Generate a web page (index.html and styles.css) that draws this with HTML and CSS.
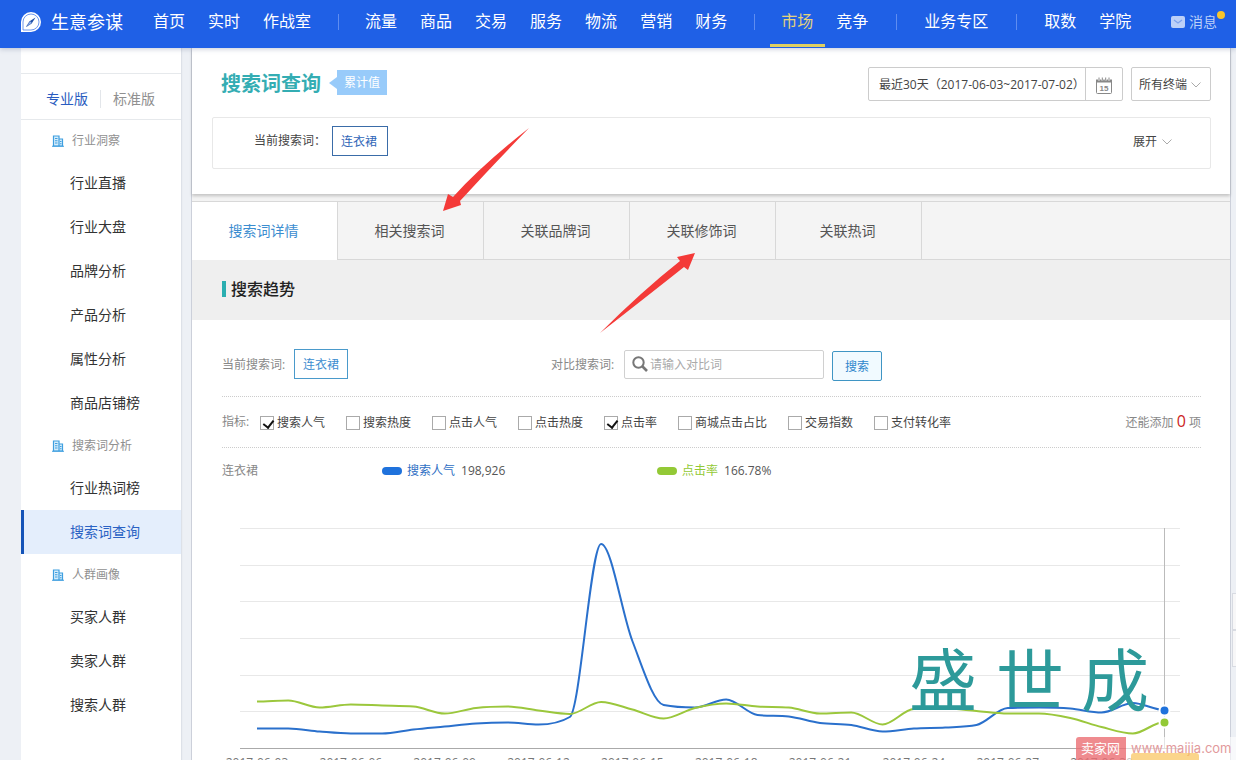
FILE: index.html
```html
<!DOCTYPE html>
<html lang="zh-CN">
<head>
<meta charset="utf-8">
<meta name="viewport" content="width=device-width, initial-scale=1">
<title>生意参谋 - 搜索词查询</title>
<link rel="stylesheet" href="styles.css">
</head>
<body>
<header class="topbar">
  <a class="brand" href="#">
    <svg class="brand-icon" viewBox="0 0 22 22" width="22" height="22" aria-hidden="true">
      <path d="M1 21V11a10 10 0 1 1 10 10z" fill="#fff"/>
      <path d="M3 19V11a8 8 0 1 1 8 8z" fill="none" stroke="#4a7eea" stroke-width="0.8"/>
      <path d="M15.500 6.500 12 12 10 10z" fill="#1f4fa8"/>
      <path d="M6.500 15.500 10 10 12 12z" fill="#8fb0f0" stroke="#1f4fa8" stroke-width="0.6"/>
    </svg>
    <span>生意参谋</span>
  </a>
  <nav class="nav">
    <a href="#">首页</a><a href="#">实时</a><a href="#">作战室</a>
    <i class="sep"></i>
    <a href="#">流量</a><a href="#">商品</a><a href="#">交易</a><a href="#">服务</a><a href="#">物流</a><a href="#">营销</a><a href="#">财务</a>
    <i class="sep"></i>
    <a class="current" href="#">市场</a><a href="#">竞争</a>
    <i class="sep wide"></i>
    <a href="#">业务专区</a>
    <i class="sep wide"></i>
    <a href="#">取数</a><a href="#">学院</a>
  </nav>
  <a class="message" href="#">
    <svg viewBox="0 0 14 12" width="14" height="12" aria-hidden="true"><rect width="14" height="12" rx="2" fill="#bcd0f8"/><path d="M3 4l4 3 4-3" fill="none" stroke="#7da2ee" stroke-width="1.2"/></svg>
    <span>消息</span><i class="dot"></i>
  </a>
</header>

<svg class="symbols" aria-hidden="true">
  <symbol id="building" viewBox="0 0 12 12">
    <path d="M1.500 11V1h5.500v10zM7 4h3.500v7H7z" fill="#d6edfb" stroke="#3f9fe0" stroke-width="1.200"/>
    <path d="M0 11.200h12M3 3.500h2.500M3 5.700h2.500M3 8h2.500M8 6.500h1.500M8 8.700h1.500" stroke="#3f9fe0" stroke-width="1.100"/>
  </symbol>
</svg>

<div class="page">
  <aside class="sidebar">
    <div class="editions"><a class="on" href="#">专业版</a><a href="#">标准版</a></div>
    <h3><svg width="12" height="12"><use href="#building"/></svg>行业洞察</h3>
    <a href="#">行业直播</a>
    <a href="#">行业大盘</a>
    <a href="#">品牌分析</a>
    <a href="#">产品分析</a>
    <a href="#">属性分析</a>
    <a href="#">商品店铺榜</a>
    <h3><svg width="12" height="12"><use href="#building"/></svg>搜索词分析</h3>
    <a href="#">行业热词榜</a>
    <a class="selected" href="#">搜索词查询</a>
    <h3><svg width="12" height="12"><use href="#building"/></svg>人群画像</h3>
    <a href="#">买家人群</a>
    <a href="#">卖家人群</a>
    <a href="#">搜索人群</a>
  </aside>

  <main class="main">
    <section class="query">
      <div class="query-head">
        <h1>搜索词查询</h1><span class="flag">累计值</span>
        <div class="range">
          <span class="range-text">最近30天（2017-06-03~2017-07-02）</span>
          <button class="calendar" type="button" aria-label="选择日期">
            <svg viewBox="0 0 16 17" width="16" height="17" aria-hidden="true"><path d="M.5 5v10.500a1 1 0 0 0 1 1h13a1 1 0 0 0 1-1V5z" fill="none" stroke="#888"/><path d="M0 2.500h16v2.500H0z" fill="#888"/><path d="M3 .5v3M6.300.5v3M9.700.5v3M13 .5v3" stroke="#fff" stroke-width="2"/><path d="M3 .5v3M6.300.5v3M9.700.5v3M13 .5v3" stroke="#888"/><text x="8" y="14" text-anchor="middle" class="cal-day">15</text></svg>
          </button>
        </div>
        <div class="terminal">
          <select aria-label="终端"><option>所有终端</option></select>
          <svg class="chev" viewBox="0 0 10 6" width="10" height="6" aria-hidden="true"><path d="M.5.5 5 5 9.500.5"/></svg>
        </div>
      </div>
      <div class="current-word">
        <span>当前搜索词：</span><button class="chip dark" type="button">连衣裙</button>
        <button class="expand" type="button">展开<svg class="chev" viewBox="0 0 10 6" width="10" height="6" aria-hidden="true"><path d="M.5.5 5 5 9.500.5"/></svg></button>
      </div>
    </section>

    <nav class="tabs">
      <a class="active" href="#">搜索词详情</a><a href="#">相关搜索词</a><a href="#">关联品牌词</a><a href="#">关联修饰词</a><a href="#">关联热词</a>
    </nav>
    <h2 class="section-title">搜索趋势</h2>

    <section class="trend">
      <div class="compare">
        <span class="word-label">当前搜索词:</span><button class="chip" type="button">连衣裙</button>
        <label class="compare-label" for="compare">对比搜索词:</label>
        <div class="search-box">
          <svg viewBox="0 0 16 16" width="16" height="16" aria-hidden="true"><circle cx="6.500" cy="6.500" r="5.200" fill="none" stroke="#777" stroke-width="2"/><path d="M10.500 10.500l4.500 4.500" stroke="#777" stroke-width="2.600"/></svg>
          <input id="compare" type="text" placeholder="请输入对比词">
        </div>
        <button class="search-btn" type="button">搜索</button>
      </div>
      <div class="metrics">
        <span class="metrics-title">指标:</span>
        <label><input type="checkbox" checked>搜索人气</label>
        <label><input type="checkbox">搜索热度</label>
        <label><input type="checkbox">点击人气</label>
        <label><input type="checkbox">点击热度</label>
        <label><input type="checkbox" checked>点击率</label>
        <label><input type="checkbox">商城点击占比</label>
        <label><input type="checkbox">交易指数</label>
        <label><input type="checkbox">支付转化率</label>
        <span class="remain">还能添加 <b>0</b> 项</span>
      </div>
      <div class="legend">
        <span class="legend-word">连衣裙</span>
        <span class="legend-item blue"><i></i><em>搜索人气</em>198,926</span>
        <span class="legend-item green"><i></i><em>点击率</em>166.78%</span>
      </div>
      <svg id="chart" class="chart" viewBox="222 494 979 266" role="img" aria-label="搜索趋势图">
        <path class="grid" d="M240 528.500h940M240 565.500h940M240 601.500h940M240 638.500h940M240 675.500h940M240 711.500h940"/>
        <path class="axis" d="M240 748.500h940"/>
        <path class="cursor" d="M1164.500 528v220"/>
        <g id="lines"></g>
        <text class="signature" x="909 996 1081" y="706">盛世成</text>
      </svg>
    </section>
  </main>
  <div class="side-tools"><i></i><i></i></div>
</div>

<svg class="arrows" viewBox="0 0 1236 760" aria-hidden="true">
  <path d="M529 128Q482 165 453 197L448 194 443 211 461 205 460 201Q490 168 529 128z"/>
  <path d="M600 333Q642 291 680 261L677 257 695 253 688 270 684 267Q650 294 600 333z"/>
</svg>
<div class="watermark"><span class="wm-tag">卖家网</span><span class="wm-url">www.maijia.com</span><i class="wm-strip"></i></div>
<script src="chart.js"></script>
</body>
</html>
```
FILE: styles.css
```css
* { box-sizing: border-box; }
body {
  margin: 0;
  min-height: 100vh;
  position: relative;
  display: flex;
  flex-direction: column;
  overflow-x: hidden;
  background: #edf0f5;
  color: #444;
  font: 12px/18px "Open Sans", "Noto Sans CJK SC", sans-serif;
}
a { color: inherit; text-decoration: none; }
i, em { font-style: normal; }
h1, h2, h3 { margin: 0; }
button, select, input { font: inherit; color: inherit; }
button { cursor: pointer; }
.symbols { display: none; }

.topbar {
  height: 48px;
  display: flex;
  align-items: center;
  padding: 0 12px 0 20px;
  background: #1f60e6;
  color: #fff;
  position: relative;
  z-index: 1;
  box-shadow: 0 1px 5px rgba(30, 50, 100, .25);
}
.brand { display: flex; align-items: center; gap: 9px; width: 122px; height: 43px; margin-bottom: 4px; font-size: 18px; white-space: nowrap; }
.nav { display: flex; align-items: center; height: 48px; font-size: 16px; white-space: nowrap; }
.nav a { height: 48px; padding: 0 12px 0 11px; line-height: 42px; }
.nav .current { color: #e3d27c; border-bottom: 3px solid #e0d060; height: 47px; margin-bottom: 1px; }
.sep { width: 1px; height: 16px; margin: 0 15px 4px; background: #5f8df0; }
.sep.wide { margin: 0 16px 4px; }
.message { position: relative; display: flex; align-items: center; gap: 4px; margin: 0 0 4px auto; padding-right: 7px; height: 44px; font-size: 14px; color: #bcd0f8; white-space: nowrap; }
.dot { position: absolute; top: 11px; right: -1px; width: 8px; height: 8px; border-radius: 50%; background: #f7c52c; }

.page { flex: 1; display: flex; padding-left: 21px; }
.sidebar { width: 160px; flex: none; margin-right: 10px; padding-top: 25px; background: #fff; box-shadow: 1px 0 1px #dde1e8; }
.sidebar > a { display: block; height: 44px; padding-left: 49px; font-size: 14px; line-height: 44px; color: #333; }
.sidebar > .selected { background: #e4eefc; color: #2a62c4; border-left: 3px solid #1453b8; padding-left: 46px; }
.sidebar h3 { display: flex; align-items: center; gap: 8px; height: 41px; padding-left: 31px; font-size: 12px; font-weight: 400; color: #909090; }
.editions { display: flex; align-items: center; height: 47px; padding: 4px 0 0 25px; border: solid #e6e9ec; border-width: 1px 0; font-size: 14px; color: #909090; }
.editions a + a { margin-left: 12px; padding-left: 12px; border-left: 1px solid #e3e6ea; }
.editions .on { color: #2a5cc0; }

.main { flex: 1; min-width: 0; border: solid #ccd0da; border-width: 0 1px; background: #fff; display: flex; flex-direction: column; }
.query { position: relative; padding: 19px 19px 25px 20px; background: #fff; box-shadow: 0 2px 3px rgba(0, 0, 0, .2); }
.query-head { display: flex; align-items: center; height: 34px; margin-bottom: 16px; padding-left: 9px; }
h1 { font-size: 20px; line-height: 30px; color: #34adb3; white-space: nowrap; }
.flag { position: relative; margin: 0 0 4px 16px; padding: 0 7px; background: #98cbfa; color: #fff; line-height: 25px; white-space: nowrap; }
.flag::before { content: ""; position: absolute; left: -8px; top: 7px; border: solid transparent; border-width: 6px 8px 6px 0; border-right-color: #98cbfa; }
.range { display: flex; margin-left: auto; height: 34px; border: 1px solid #ccc; border-radius: 2px; line-height: 34px; }
.range-text { width: 217px; padding-left: 10px; white-space: nowrap; overflow: hidden; border-right: 1px solid #ccc; }
.calendar { width: 36px; padding: 3px 0 0; border: 0; background: none; line-height: 0; }
.cal-day { font: bold 8px "Liberation Sans", sans-serif; fill: #888; }
.terminal { position: relative; margin-left: 8px; }
.terminal select { display: block; width: 80px; height: 34px; padding: 2px 0 0 7px; appearance: none; background: #fff; border: 1px solid #ccc; border-radius: 2px; }
.terminal .chev { position: absolute; right: 10px; top: 15px; }
.chev path { fill: none; stroke: #aaa; }
.current-word { display: flex; align-items: center; height: 52px; padding: 0 38px 4px 41px; border: 1px solid #e8e8e8; border-radius: 2px; line-height: 20px; white-space: nowrap; }
.chip { height: 30px; padding: 0 7px; background: #fff; border: 1px solid #4a9acb; color: #3c8dd0; line-height: 30px; }
.current-word .chip { width: 56px; margin-left: 6px; padding-right: 9px; }
.chip.dark { border-color: #3a6ca8; color: #2f66b8; }
.expand { display: flex; align-items: center; gap: 5px; margin-left: auto; padding: 2px 0 0; background: none; border: 0; }

.tabs { display: flex; height: 59px; margin-top: 7px; border: solid #d8d8d8; border-width: 1px 0; background: #f4f4f4; box-shadow: 0 -7px 0 #f3f3f3; font-size: 14px; line-height: 58px; color: #555; }
.tabs a { width: 146px; padding-right: 2px; border-right: 1px solid #d8d8d8; text-align: center; }
.tabs .active { height: 58px; background: #fff; color: #3c8dd0; }
.section-title { display: flex; align-items: center; gap: 5px; height: 60px; padding: 0 30px 2px; background: #efefef; font-size: 16px; font-weight: 500; color: #222; }
.section-title::before { content: ""; width: 4px; height: 16px; background: #2aaeb0; }

.trend { padding: 0 29px 0 30px; color: #888; }
.compare { display: flex; align-items: center; padding: 29px 0 15px; border-bottom: 1px dotted #ccc; line-height: 20px; white-space: nowrap; }
.compare .chip { width: 54px; margin-bottom: 2px; }
.word-label, .compare-label { width: 72px; }
.compare-label { margin-left: 203px; }
.search-box { display: flex; align-items: center; gap: 2px; width: 200px; height: 29px; margin: 0 8px 2px 1px; padding-left: 7px; border: 1px solid #d0d0d0; border-radius: 2px; }
.search-box input { width: 160px; border: 0; padding: 2px 0 0; outline: 0; background: none; }
.search-box input::placeholder { color: #aaa; }
.search-btn { width: 50px; height: 30px; margin-top: 2px; padding: 0; border: 1px solid #3f95c4; border-radius: 2px; background: #f1faff; color: #2f86cc; line-height: 30px; }
.metrics { display: flex; align-items: center; height: 51px; gap: 21px; border-bottom: 1px dotted #ccc; color: #444; line-height: 20px; white-space: nowrap; }
.metrics-title { width: 38px; margin-right: -21px; color: #888; }
.metrics label { display: flex; align-items: center; gap: 3px; padding-top: 2px; }
.metrics input { position: relative; appearance: none; width: 14px; height: 14px; margin: 0; border: 1px solid #aaa; background: #fff; }
.metrics input:checked::before { content: ""; position: absolute; left: 4px; top: 1px; width: 5px; height: 8px; border: solid #111; border-width: 0 2px 2px 0; transform: rotate(38deg); }
.remain { margin-left: auto; color: #888; }
.remain b { font-size: 16px; font-weight: 400; color: #c22; }
.legend { display: flex; align-items: center; height: 46px; color: #555; }
.legend-word { width: 160px; color: #888; }
.legend-item { display: flex; align-items: center; width: 275px; }
.legend i { width: 20px; height: 8px; margin-right: 5px; border-radius: 4px; background: #1f72dc; }
.legend em { margin-right: 6px; color: #2f6fc4; }
.legend .green i { background: #93c936; }
.legend .green em { color: #93c936; }

.chart { display: block; width: 100%; }
.grid { stroke: #e8e8e8; }
.axis { stroke: #aaa; }
.cursor { stroke: #bbb; }
.series { fill: none; stroke-width: 2; stroke-linejoin: round; }
.series-blue { stroke: #2a70cc; }
.series-green { stroke: #9bc73c; }
.mark { stroke: #fff; stroke-width: 2; }
.mark-blue { fill: #1f72dc; }
.mark-green { fill: #93c936; }
.date { font-size: 12px; fill: #777; text-anchor: middle; }
.signature { font: 400 68px "Noto Sans CJK SC", sans-serif; fill: #2d9a9a; }

.side-tools { flex: none; width: 5px; padding: 545px 0 0 1px; }
.side-tools i { display: block; height: 37px; border: 1px solid #d8dbe2; border-right: 0; background: #f7f7f8; }
.arrows { position: absolute; left: 0; top: 0; width: 1236px; height: 760px; z-index: 2; pointer-events: none; }
.arrows path { fill: #f43a38; }
.watermark { position: absolute; right: 0; bottom: 0; z-index: 3; display: flex; height: 23px; line-height: 22px; font-family: "Inter", "Noto Sans CJK SC", sans-serif; }
.wm-tag { width: 50px; padding-left: 5px; border-radius: 3px 0 0 0; background: rgba(235, 110, 115, .8); color: #fff; font-size: 13px; }
.wm-url { width: 110px; padding-left: 5px; background: rgba(255, 255, 255, .6); color: #e29a9c; font-size: 13px; }
.wm-strip { position: absolute; left: 55px; bottom: 0; width: 68px; height: 7px; border-radius: 3px 3px 0 0; background: rgba(250, 195, 90, .7); }
```
FILE: chart.js
```js
const SVG = "http://www.w3.org/2000/svg";
const X0 = 257;
const STEP = 31.28;
const series = {
  blue: [728.5, 728.5, 731.5, 733.5, 733.5, 729.5, 726.5, 723.5, 722.5, 724.5, 717, 544, 641, 705, 707.5, 699.5, 715, 716.5, 723, 725, 731.5, 728.5, 727.5, 725, 708, 707.5, 708.5, 712.5, 703, 710],
  green: [701.5, 700.5, 707.5, 704.5, 705.5, 706.5, 713.5, 708, 706.5, 710.5, 714, 702, 709.5, 718.5, 708, 703.5, 706.5, 707.5, 713.5, 712.5, 724.5, 709, 708.5, 711, 713.5, 713.5, 718, 727, 733.5, 722]
};

function add(parent, name, attrs, text) {
  const el = document.createElementNS(SVG, name);
  for (const key in attrs) el.setAttribute(key, attrs[key]);
  if (text) el.textContent = text;
  parent.appendChild(el);
}

// Cubic spline whose tangents flatten at local peaks, so it never overshoots.
function spline(ys) {
  const slope = ys.map((y, i) => {
    if (i === 0 || i === ys.length - 1) return 0;
    const a = y - ys[i - 1];
    const b = ys[i + 1] - y;
    if (a * b <= 0) return 0;
    const m = (a + b) / 2;
    const limit = 2.5 * Math.min(Math.abs(a), Math.abs(b));
    return Math.sign(m) * Math.min(Math.abs(m), limit);
  });
  let d = `M${X0} ${ys[0]}`;
  const t = 0.33;
  for (let i = 1; i < ys.length; i++) {
    const x = X0 + STEP * i;
    const px = x - STEP;
    d += `C${px + STEP * t} ${ys[i - 1] + slope[i - 1] * t} ${x - STEP * t} ${ys[i] - slope[i] * t} ${x} ${ys[i]}`;
  }
  return d;
}

const lines = document.getElementById("lines");
for (const name in series) {
  add(lines, "path", { class: `series series-${name}`, d: spline(series[name]) });
}
for (const name in series) {
  add(lines, "circle", { class: `mark mark-${name}`, cx: 1164.5, cy: series[name][29] + 0.5, r: 5 });
}
for (let i = 0; i < 10; i++) {
  const day = String(3 + i * 3).padStart(2, "0");
  add(lines, "text", { class: "date", x: X0 + STEP * 3 * i, y: 767 }, `2017-06-${day}`);
}
```
